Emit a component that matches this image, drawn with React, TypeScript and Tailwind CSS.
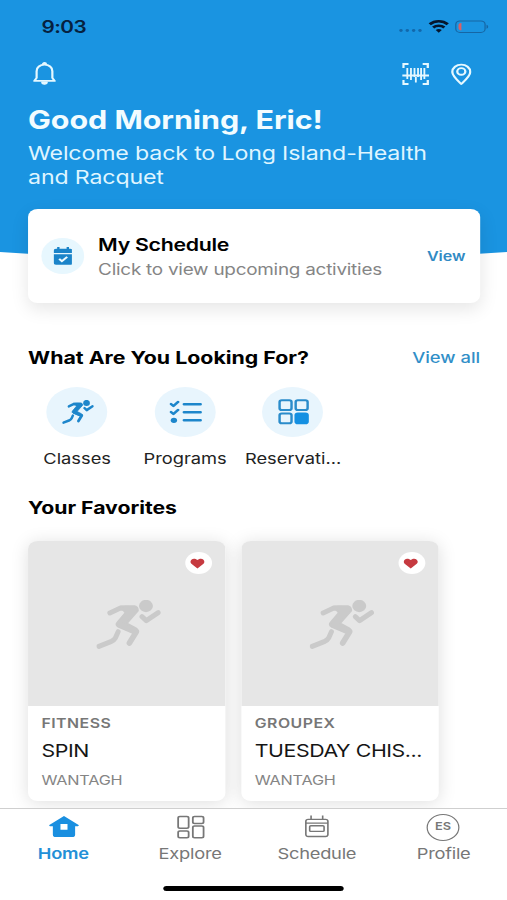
import type { ReactNode } from "react";

const shortcuts = [
  { label: "Classes", icon: <RunnerIcon className="ml-[2px] h-6 w-[26px] text-[#1d86cb]" /> },
  { label: "Programs", icon: <ChecklistIcon /> },
  { label: "Reservati...", icon: <GridIcon /> },
];

const favorites = [
  { category: "FITNESS", name: "SPIN", club: "WANTAGH" },
  { category: "GROUPEX", name: "TUESDAY CHIS...", club: "WANTAGH" },
];

function RunnerIcon({ className }: { className: string }) {
  return (
    <svg viewBox="0 0 195 147" preserveAspectRatio="none" className={className} fill="none" stroke="currentColor" strokeLinecap="round" strokeLinejoin="round">
      <ellipse cx="150" cy="18" rx="21" ry="18.5" fill="currentColor" stroke="none" />
      <path d="M41 39 73 24 115 26" strokeWidth="15" />
      <path d="M73 20 90 18H116Q126 20 126 32L92 70 120 85Q127 89 124 97L108 98 66 80Q57 75 63 68L88 38Z" fill="currentColor" strokeWidth="5" />
      <path d="M72 75 121 95 100 129" strokeWidth="17" />
      <path d="M66 95 58 113Q54 120 46 124L8 139" strokeWidth="15" />
      <path d="M138 50 151 62 187 38" strokeWidth="15" />
    </svg>
  );
}

function ChecklistIcon() {
  return (
    <svg viewBox="0 0 27 24" className="ml-[2px] h-6 w-[27px]" fill="none" stroke="#1d86cb" strokeWidth="2.4" strokeLinecap="round" strokeLinejoin="round">
      <path d="m1.3 4 2 2L7 2M1.3 12l2 2L7 10M12 4.2H25.5M12 12.2H25.5M12 20.2H25.5" />
      <circle cx="3.7" cy="20.3" r="2.6" fill="#1d86cb" stroke="none" />
    </svg>
  );
}

function GridIcon() {
  return (
    <svg viewBox="0 0 26 26" className="ml-px h-[26px] w-[26px]" fill="none" stroke="#2a8ccb" strokeWidth="2">
      <rect x="1.4" y="1.3" width="9.8" height="9.7" rx="1.8" />
      <rect x="14.6" y="1.3" width="9.8" height="9.7" rx="1.8" />
      <rect x="1.4" y="14.5" width="9.8" height="9.7" rx="1.8" />
      <rect x="14.6" y="14.5" width="9.8" height="9.7" rx="1.8" fill="#1590e2" stroke="#1590e2" />
    </svg>
  );
}

function StatusBar() {
  return (
    <div className="flex h-[54px] items-center justify-between pr-[15px] pl-[34px]">
      <span className="pt-px text-[17px] font-semibold tracking-[-0.4px] text-[#06213f]">9:03</span>
      <svg viewBox="0 0 76 16" className="h-4 w-[76px]">
        <g fill="#1268ab">
          <circle cx="4" cy="11.5" r="1.4" />
          <circle cx="9.2" cy="11.5" r="1.4" />
          <circle cx="14.4" cy="11.5" r="1.4" />
          <circle cx="19.6" cy="11.5" r="1.4" />
        </g>
        <path d="M27.6 5.2a10.6 10.6 0 0 1 14.8 0M30.4 8.5a6.8 6.8 0 0 1 9.2 0" fill="none" stroke="#06162c" strokeWidth="2.6" />
        <path d="M32.5 11a3.8 3.8 0 0 1 5 0L35 13.8z" fill="#06162c" />
        <rect x="49" y="1.9" width="24" height="11.6" rx="3.4" fill="none" stroke="#1666a4" strokeWidth="1" />
        <path d="M53.6 4.1v7.2q-2.4 0-2.4-2.4V6.5q0-2.4 2.4-2.4z" fill="#dc6065" />
        <path d="M74.2 5.8q1.4.5 1.4 2t-1.400 2z" fill="#1666a4" />
      </svg>
    </div>
  );
}

function Header() {
  return (
    <div className="h-[261px] bg-[#1a94e1] [clip-path:ellipse(200%_260.3px_at_50%_0)]">
      <StatusBar />
      <div className="flex h-10 items-center justify-between pr-[29.5px] pl-[27px]">
        <svg viewBox="0 0 20 26" className="h-[26px] w-[19px]" fill="none" stroke="#e5f8ff" strokeWidth="1.9" strokeLinejoin="round">
          <path d="M1.2 20.3h17.6l-2-3.2V10c0-4-2.8-6.8-6.8-6.8S3.2 6 3.2 10v7.1z" />
          <path d="M8.5 2.6a1.5 1.5 0 0 1 3 0zM7.8 21.5h4.4a2.2 2.2 0 0 1-4.4 0z" fill="#e5f8ff" strokeWidth="1.4" />
        </svg>
        <div className="flex items-center gap-[18px]">
          <svg viewBox="0 0 22 22" className="h-[22px] w-[22px]" fill="none" stroke="#e5f8ff" strokeWidth="1.9">
            <path d="M5.2 1H1v4M16.8 1H21v4M5.2 21H1v-4M16.8 21H21v-4M0 12.5h22" />
            <path d="M4.2 5v11M7.2 5v12M10.1 5v9M11.2 14v5.5M13 5v9M15.5 5v12M18.2 5v11" strokeWidth="1.5" />
          </svg>
          <svg viewBox="0 0 18 23" className="h-[23px] w-[17px]" fill="none" stroke="#e5f8ff" strokeWidth="2">
            <path d="M9 21.5C5.5 17.5 1.2 13 1.2 8.8a7.8 7.8 0 0 1 15.6 0C16.8 13 12.5 17.5 9 21.5z" strokeLinejoin="round" />
            <circle cx="9" cy="8.2" r="3.5" />
          </svg>
        </div>
      </div>
      <div className="px-[23px] pt-[9px] text-[#f2fcff]">
        <h1 className="text-[25px] leading-[34px] font-bold tracking-[-0.05px]">Good Morning, Eric!</h1>
        <p className="pt-[5px] text-[19px] leading-6 tracking-[-0.12px] text-[#dff5ff]">
          Welcome back to Long Island-Health
          <br />
          and Racquet
        </p>
      </div>
    </div>
  );
}

function ScheduleCard() {
  return (
    <div className="relative -mt-[52px] mr-[22px] ml-[23px] flex h-[94px] items-center rounded-lg bg-white pr-3 pl-[11px] shadow-[0_6px_16px_rgba(0,0,0,0.1)]">
      <div className="grid h-9 w-[35px] place-items-center rounded-full bg-[#e7f7fe]">
        <svg viewBox="0 0 16 19" className="mb-px h-[19px] w-[15.5px]">
          <path d="M4 .8v4M12 .8v4" stroke="#1b84c9" strokeWidth="2" />
          <path d="M0 7V4.600q0-2 2-2h12q2 0 2 2V7zM0 8.300h16V17q0 2-2 2H2q-2 0-2-2z" fill="#1b84c9" />
          <path d="m4.700 13 2.300 2.400 4.500-4.400" fill="none" stroke="#edfaff" strokeWidth="1.9" />
        </svg>
      </div>
      <div className="ml-[11.5px] flex-1 pt-[2px] whitespace-nowrap">
        <h2 className="text-[17.5px] leading-6 font-semibold tracking-[-0.25px] text-black">My Schedule</h2>
        <p className="text-[15.5px] leading-[25px] tracking-[-0.2px] text-[#858585]">Click to view upcoming activities</p>
      </div>
      <span className="pt-px text-[13.2px] font-semibold text-[#318ac4]">View</span>
    </div>
  );
}

function FavoriteCard({ category, name, club }: { category: string; name: string; club: string }) {
  return (
    <div className="h-[260px] w-[162px] shrink-0 overflow-hidden rounded-lg bg-white shadow-[0_2px_16px_rgba(0,0,0,0.13)]">
      <div className="relative flex h-[165px] items-center justify-center bg-[#e6e6e6]">
        <RunnerIcon className="mt-[2px] ml-[3px] h-[49px] w-[53px] text-[#cacaca]" />
        <div className="absolute top-[11px] right-[11.5px] grid h-[22px] w-[22px] place-items-center rounded-full bg-white">
          <svg viewBox="0 0 14 12" className="mr-px h-[11px] w-[12px]">
            <path d="M7 11.8 1.2 6.3C-1.6 3 2.5-2.2 7 1.8 11.5-2.2 15.6 3 12.8 6.3z" fill="#c63a40" />
          </svg>
        </div>
      </div>
      <div className="px-[11px] whitespace-nowrap">
        <p className="pt-[7px] text-[13px] leading-5 font-semibold tracking-[0.4px] text-[#777]">{category}</p>
        <p className="pt-[6px] text-[17.5px] leading-6 tracking-[-0.35px] text-[#151515]">{name}</p>
        <p className="pt-[7px] text-[13.3px] leading-5 tracking-[-0.15px] text-[#858585]">{club}</p>
      </div>
    </div>
  );
}

function Tab({ label, active, children }: { label: string; active?: boolean; children: ReactNode }) {
  return (
    <div className={`flex flex-1 flex-col items-center ${active ? "text-[#2390d7]" : "text-[#777]"}`}>
      <div className="grid h-[35px] place-items-center">{children}</div>
      <span className={`text-[15px] leading-5 tracking-[-0.2px] ${active ? "font-semibold" : "font-normal"}`}>{label}</span>
    </div>
  );
}

function TabBar() {
  return (
    <nav className="h-[92px] border-t border-[#cfcfcf] bg-white">
      <div className="flex">
        <Tab label="Home" active>
          <svg viewBox="0 0 26 23" className="h-[23px] w-[25px]" fill="#1a8fe0">
            <path fillRule="evenodd" d="M13 .5 25.5 10q.5 1-.6 1.2H22.5V20q0 2.5-2.500 2.500H6Q3.500 22.500 3.500 20v-8.800H1.100Q0 11 .5 10zM10 9v6h6V9z" />
          </svg>
        </Tab>
        <Tab label="Explore">
          <svg viewBox="0 0 24 24" className="ml-[2px] h-6 w-[23.5px]" fill="none" stroke="#777" strokeWidth="1.5">
            <rect x="1.2" y="1.2" width="8.8" height="12" rx="1.5" />
            <rect x="13.5" y="1.2" width="9" height="7.2" rx="1.5" />
            <rect x="1.2" y="16" width="8.8" height="7" rx="1.5" />
            <rect x="13.5" y="11" width="9" height="12" rx="1.5" />
          </svg>
        </Tab>
        <Tab label="Schedule">
          <svg viewBox="0 0 21 23" className="h-[23px] w-[20px]" fill="none" stroke="#777" strokeWidth="1.4">
            <rect x="1" y="4" width="19" height="18" rx="2" />
            <path d="M5.5 0v4M15.5 0v4M1 8h19" />
            <rect x="4.3" y="10.7" width="12.4" height="6" rx="1" />
          </svg>
        </Tab>
        <Tab label="Profile">
          <div className="mt-px mr-px grid h-[27px] w-[27px] place-items-center rounded-full border border-[#777] text-[10.5px] font-semibold">ES</div>
        </Tab>
      </div>
      <div className="mx-auto mt-[22px] h-[5px] w-[148px] rounded-full bg-black" />
    </nav>
  );
}

export default function App() {
  return (
    <div className="h-[900px] w-[507px] overflow-hidden bg-white">
      <div className="flex h-[900px] w-[416px] origin-top-left scale-x-[1.21875] flex-col bg-white font-['Inter',sans-serif]">
        <main className="h-[808px] overflow-hidden">
          <Header />
          <ScheduleCard />
          <div className="mt-[43px] flex h-6 items-center justify-between pr-[22px] pl-[23px]">
            <h2 className="text-[17.5px] font-bold text-black">What Are You Looking For?</h2>
            <span className="text-[15.1px] font-medium text-[#318fc8]">View all</span>
          </div>
          <div className="mt-[17px] ml-[19px] flex">
            {shortcuts.map((item) => (
              <div key={item.label} className="flex w-[88.6px] flex-col items-center">
                <div className="grid h-[50px] w-[50px] place-items-center rounded-full bg-[#e8f5fd]">{item.icon}</div>
                <span className="mt-[10px] text-[15px] leading-6 text-[#222]">{item.label}</span>
              </div>
            ))}
          </div>
          <h2 className="mt-[25px] ml-[23px] text-[17.4px] leading-6 font-bold text-black">Your Favorites</h2>
          <div className="mt-[21px] flex gap-[13px] pl-[23px]">
            {favorites.map((item) => (
              <FavoriteCard key={item.category} {...item} />
            ))}
          </div>
        </main>
        <TabBar />
      </div>
    </div>
  );
}
